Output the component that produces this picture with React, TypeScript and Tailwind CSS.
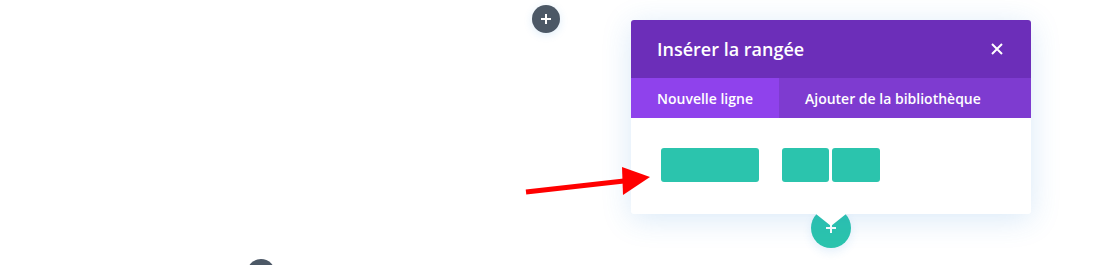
import React from "react";

export default function App() {
  return (
    <div className="relative w-[1096px] h-[265px] overflow-hidden bg-white" style={{ fontFamily: '"Open Sans", "Liberation Sans", sans-serif' }}>
      {/* top dark plus button */}
      <div className="absolute left-[532px] top-[5px] w-[28px] h-[28px] rounded-full bg-[#4c5866] shadow-[0_2px_8px_rgba(43,135,218,0.15)] flex items-center justify-center">
        <svg width="10" height="10" viewBox="0 0 10 10"><path d="M5 0v10M0 5h10" stroke="#fff" strokeWidth="2" /></svg>
      </div>
      {/* bottom dark circle */}
      <div className="absolute left-[247px] top-[259px] w-[28px] h-[28px] rounded-full bg-[#4c5866]" />

      {/* green plus circle behind modal */}
      <div className="absolute left-[811px] top-[208px] w-[40px] h-[40px] rounded-full bg-[#2bc4ad] shadow-[0_4px_10px_rgba(43,135,218,0.12)] flex items-center justify-center">
        <svg width="10" height="10" viewBox="0 0 10 10"><path d="M5 0v10M0 5h10" stroke="#fff" strokeWidth="2" /></svg>
      </div>

      {/* modal */}
      <div className="absolute left-[631px] top-[20px] w-[400px] rounded-[3px] shadow-[0_5px_30px_rgba(43,135,218,0.18)] bg-white">
        <div className="h-[58px] bg-[#6c2eb9] rounded-t-[3px] flex items-center justify-between pl-[26px] pr-[28px]">
          <span className="text-white text-[18px] font-semibold leading-none">Insérer la rangée</span>
          <svg width="12" height="12" viewBox="0 0 12 12"><path d="M1 1l10 10M11 1L1 11" stroke="#fff" strokeWidth="2" /></svg>
        </div>
        <div className="h-[40px] flex bg-[#7e3bd0]">
          <div className="h-full px-[26px] bg-[#8f42ec] flex items-center text-white text-[14px] font-semibold">Nouvelle ligne</div>
          <div className="h-full px-[26px] flex items-center text-white text-[14px] font-semibold">Ajouter de la bibliothèque</div>
        </div>
        <div className="relative h-[96px] pt-[30px] pl-[30px] flex gap-[23px]">
          <div className="w-[98px] h-[34px] rounded-[3px] bg-[#2bc4ad]" />
          <div className="flex gap-[3px]">
            <div className="w-[47px] h-[34px] rounded-[3px] bg-[#2bc4ad]" />
            <div className="w-[48px] h-[34px] rounded-[3px] bg-[#2bc4ad]" />
          </div>
          {/* pointer */}
          <div className="absolute left-[185px] top-full w-0 h-0 border-l-[15px] border-r-[15px] border-t-[12px] border-l-transparent border-r-transparent border-t-white" />
        </div>
      </div>

      {/* red arrow */}
      <svg className="absolute left-0 top-0" width="1096" height="265" viewBox="0 0 1096 265">
        <path d="M526 192L624 181" stroke="#ff0000" strokeWidth="5" />
        <path d="M622 167L650 177L623 195Z" fill="#ff0000" />
      </svg>
    </div>
  );
}
